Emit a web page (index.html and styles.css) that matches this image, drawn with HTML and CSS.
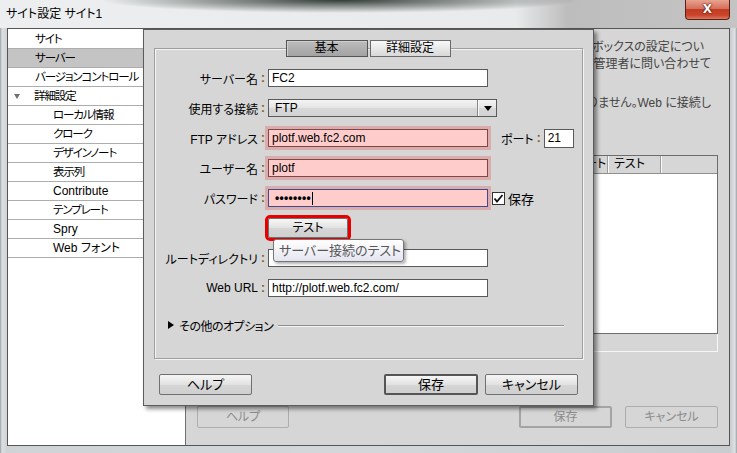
FILE: index.html
```html
<!doctype html>
<html lang="ja">
<head>
    <meta charset="utf-8">
    <title>サイト設定 サイト1</title>
    <link rel="stylesheet" href="styles.css">
</head>
<body>
<div class="window">
    <!-- Barre de titre -->
    <div class="titlebar">
        <span class="title">サイト設定 サイト1</span>
        <span class="close-btn">X</span>
    </div>

    <div class="client">
        <!-- Catégories -->
        <ul class="category-list">
            <li>サイト</li>
            <li class="selected">サーバー</li>
            <li>バージョンコントロール</li>
            <li class="group"><span class="arrow"></span>詳細設定</li>
            <li class="sub">ローカル情報</li>
            <li class="sub">クローク</li>
            <li class="sub">デザインノート</li>
            <li class="sub">表示列</li>
            <li class="sub latin">Contribute</li>
            <li class="sub">テンプレート</li>
            <li class="sub latin">Spry</li>
            <li class="sub latin">Web フォント</li>
        </ul>

        <!-- Panneau serveur (derrière la boîte) -->
        <div class="main-panel">
            <div class="intro">
                <p><span class="line-one">ボックスの設定につい</span><br>管理者に問い合わせて</p>
                <p>りません。Web に接続し</p>
            </div>
            <div class="server-table">
                <div class="table-list">
                    <div class="table-head">
                        <span></span>
                        <span></span>
                        <span></span>
                        <span>リモート</span>
                        <span>テスト</span>
                        <span></span>
                    </div>
                    <div class="table-body"></div>
                </div>
                <div class="table-foot"></div>
            </div>
            <div class="panel-buttons">
                <span class="btn btn-disabled help">ヘルプ</span>
                <span class="btn btn-disabled btn-default save">保存</span>
                <span class="btn btn-disabled cancel">キャンセル</span>
            </div>
        </div>

        <!-- Boîte de dialogue serveur -->
        <div class="server-dialog">
            <div class="tabs">
                <span class="tab active">基本</span>
                <span class="tab">詳細設定</span>
            </div>
            <div class="settings-box">
                <div class="form-row">
                    <span class="field-label">サーバー名</span><span class="colon">:</span>
                    <div class="text-field">FC2</div>
                </div>
                <div class="form-row">
                    <span class="field-label">使用する接続</span><span class="colon">:</span>
                    <div class="select-field"><span class="select-value">FTP</span><span class="select-arrow"></span></div>
                </div>
                <div class="form-row">
                    <span class="field-label">FTP アドレス</span><span class="colon">:</span>
                    <div class="text-field error">plotf.web.fc2.com</div>
                    <span class="port-label">ポート</span><span class="colon port-colon">:</span>
                    <div class="text-field port-field">21</div>
                </div>
                <div class="form-row">
                    <span class="field-label">ユーザー名</span><span class="colon">:</span>
                    <div class="text-field error">plotf</div>
                </div>
                <div class="form-row">
                    <span class="field-label">パスワード</span><span class="colon">:</span>
                    <div class="text-field error focused"><span class="dots">••••••••</span><span class="caret"></span></div>
                    <span class="checkbox">
                        <svg width="13" height="13" viewBox="0 0 13 13"><rect x="0.5" y="0.5" width="12" height="12" fill="#fff" stroke="#333"/><polyline points="2.5,6.5 5,9.5 10.5,3" fill="none" stroke="#111" stroke-width="1.8"/></svg>
                    </span>
                    <span class="checkbox-label">保存</span>
                </div>
                <div class="form-row test-row">
                    <span class="field-label"></span><span class="colon"></span>
                    <span class="btn test-btn">テスト</span>
                    <div class="tooltip">サーバー接続のテスト</div>
                </div>
                <div class="form-row">
                    <span class="field-label">ルートディレクトリ</span><span class="colon">:</span>
                    <div class="text-field"></div>
                </div>
                <div class="form-row">
                    <span class="field-label">Web URL</span><span class="colon">:</span>
                    <div class="text-field">http://plotf.web.fc2.com/</div>
                </div>
                <div class="more-options">
                    <span class="more-arrow"></span>
                    <span>その他のオプション</span>
                    <span class="more-line"></span>
                </div>
            </div>
            <div class="dialog-buttons">
                <span class="btn help">ヘルプ</span>
                <span class="btn btn-default save">保存</span>
                <span class="btn cancel">キャンセル</span>
            </div>
        </div>
    </div>
</div>
</body>
</html>
```

FILE: styles.css
```css
/* Fenêtre "サイト設定" */
* {
    box-sizing: border-box;
}

html, body {
    margin: 0;
    padding: 0;
}

body {
    width: 737px;
    height: 453px;
    overflow: hidden;
    font-family: "Liberation Sans", "Noto Sans CJK JP", sans-serif;
    font-size: 12px;
    font-feature-settings: "palt";
    color: #000;
}

.window {
    width: 737px;
    height: 453px;
    display: flex;
    flex-direction: column;
    background: linear-gradient(90deg, #9aa0a4 0, #dde0e2 2px, #cfd3d6 7px, #d4d7d9 50%, #c9cccf calc(100% - 7px), #dfe1e3 calc(100% - 2px), #9aa0a4 100%);
}

.titlebar {
    height: 28px;
    display: flex;
    align-items: flex-start;
    padding-left: 6px;
    background:
        radial-gradient(ellipse 240px 13px at 340px 0, rgba(18, 28, 22, 0.85), rgba(18, 28, 22, 0)),
        linear-gradient(90deg, #eceeef 0, #e8eaeb 70%, #bdbdbd 77%, #c4c4c4 100%);
}

.title {
    padding-top: 7px;
    line-height: 14px;
    font-size: 12px;
}

.close-btn {
    margin-left: auto;
    margin-right: 7px;
    width: 45px;
    height: 20px;
    border: 1px solid #5b2015;
    border-top: none;
    border-radius: 0 0 4px 4px;
    background: linear-gradient(#e9a391 0, #d4705b 45%, #c23c22 50%, #c9452b 80%, #dc7a5e 100%);
    color: #fff;
    font-family: "DejaVu Sans", sans-serif;
    font-weight: bold;
    font-size: 12px;
    line-height: 19px;
    text-align: center;
    text-shadow: 0 0 2px #400, 0 0 1px #400;
}

.client {
    flex: 1;
    margin: 0 7px 7px 7px;
    border: 1px solid #555;
    display: flex;
    position: relative;
    background: #d6d6d6;
}

/* Liste des catégories */
.category-list {
    width: 178px;
    margin: 0;
    padding: 1px 0 0 0;
    list-style: none;
    background: #fff;
    border-right: 1px solid #707070;
}

.category-list li {
    height: 19px;
    line-height: 18px;
    padding-left: 27px;
    border-bottom: 1px solid #adadad;
    white-space: nowrap;
    font-size: 11.5px;
    letter-spacing: -1.1px;
}

.category-list li.latin {
    font-size: 12px;
    letter-spacing: 0;
}

.category-list li.selected {
    background: #c4c4c4;
}

.category-list li.group {
    padding-left: 6px;
    display: flex;
    align-items: center;
}

.category-list li.sub {
    padding-left: 45px;
}

.arrow {
    width: 0;
    height: 0;
    border-left: 3.5px solid transparent;
    border-right: 3.5px solid transparent;
    border-top: 5px solid #707070;
    margin-right: 14px;
}

/* Panneau derrière */
.main-panel {
    flex: 1;
    display: flex;
    flex-direction: column;
    padding: 0 11px 17px 11px;
}

.intro {
    margin-top: 10px;
    padding-right: 7px;
    text-align: right;
    font-size: 12px;
    line-height: 17px;
    color: #444;
    white-space: nowrap;
}

.intro p {
    margin: 0 0 22px 0;
}

.line-one {
    padding-right: 7px;
}

.server-table {
    margin-top: 21px;
}

.table-list {
    border: 1px solid #6d6d6d;
}

.table-head {
    height: 18px;
    display: grid;
    grid-template-columns: 1fr 90px 90px 96px 53px 56px;
    background: #d6d6d6;
    border-bottom: 1px solid #8e8e8e;
}

.table-head span {
    padding-left: 6px;
    line-height: 17px;
    border-right: 1px solid #9c9c9c;
    box-shadow: 1px 0 0 #fafafa;
    white-space: nowrap;
}

.table-head span:nth-child(4) {
    padding-left: 52px;
}

.table-head span:last-child {
    border-right: none;
    box-shadow: none;
}

.table-body {
    height: 159px;
    background: #fff;
}

.table-foot {
    height: 18px;
    border-right: 1px solid #f6f6f6;
    border-bottom: 1px solid #f6f6f6;
}

.panel-buttons {
    margin-top: auto;
    display: flex;
}

.btn {
    display: inline-block;
    height: 22px;
    line-height: 20px;
    text-align: center;
    font-size: 12px;
    border: 1px solid #707070;
    border-radius: 2px;
    background: linear-gradient(#f6f6f6, #e2e2e2 50%, #d6d6d6 51%, #cfcfcf);
}

.btn-disabled {
    color: #8c8c8c;
    border-color: #adadad;
    background: #d6d6d6;
}

.panel-buttons .help {
    width: 92px;
}

.panel-buttons .save {
    width: 93px;
    margin-left: auto;
}

.panel-buttons .cancel {
    width: 93px;
    margin-left: 13px;
}

.btn-default {
    border-width: 2px;
    line-height: 18px;
}

.panel-buttons .btn-default {
    border-color: #a4a4a4;
}

/* Boîte de dialogue */
.server-dialog {
    position: absolute;
    left: 135px;
    top: 0;
    width: 451px;
    height: 377px;
    padding: 10px 10px 0 10px;
    border: 1px solid #5c5c5c;
    background: #d6d6d6;
    box-shadow: 3px 3px 4px rgba(0, 0, 0, 0.45);
    display: flex;
    flex-direction: column;
}

.tabs {
    position: relative;
    z-index: 1;
    height: 17px;
    display: flex;
    justify-content: center;
    gap: 2px;
    padding-right: 1px;
}

.tab {
    width: 82px;
    height: 17px;
    line-height: 15px;
    text-align: center;
    border: 1px solid #6a6a6a;
    background: linear-gradient(#f8f8f8, #d8d8d8);
}

.tab + .tab {
    width: 81px;
}

.tab.active {
    border-color: #555;
    background: linear-gradient(#bdbdbd, #a3a3a3);
    box-shadow: inset 1px 1px 0 #d0d0d0;
}

.settings-box {
    margin-top: -9px;
    height: 311px;
    padding-top: 14px;
    border: 1px solid #9e9e9e;
    box-shadow: inset 1px 1px 0 #f4f4f4, 1px 1px 0 #f4f4f4;
}

.form-row {
    height: 30px;
    display: flex;
    align-items: center;
}

.field-label {
    width: 103px;
    text-align: right;
    white-space: nowrap;
}

.colon {
    width: 10px;
    text-align: center;
    color: #8a5a12;
    font-weight: bold;
}

.text-field {
    width: 220px;
    height: 18px;
    padding: 0 3px;
    line-height: 16px;
    border: 1px solid #5a5a5a;
    background: #fff;
    white-space: nowrap;
}

.text-field.error {
    border-color: #7d4848;
    background: #ffcccc;
    box-shadow: 0 0 0 3px #dcabab;
}

.text-field.focused {
    border-color: #3f4c8c;
    display: flex;
    align-items: center;
    padding-left: 6px;
}

.dots {
    font-weight: bold;
    letter-spacing: 0.3px;
}

.caret {
    width: 1px;
    height: 13px;
    background: #000;
    margin-left: 1px;
}

.select-field {
    width: 229px;
    height: 18px;
    display: flex;
    border: 1px solid #5a5a5a;
    background: linear-gradient(#f4f4f4, #e4e4e4 50%, #d8d8d8 51%, #d2d2d2);
}

.select-value {
    flex: 1;
    padding-left: 6px;
    line-height: 16px;
}

.select-arrow {
    width: 19px;
    border-left: 1px solid #8a8a8a;
    box-shadow: inset 1px 0 0 #f8f8f8;
    position: relative;
}

.select-arrow::after {
    content: "";
    position: absolute;
    left: 6px;
    top: 6px;
    border-left: 4px solid transparent;
    border-right: 4px solid transparent;
    border-top: 5px solid #000;
}

.port-label {
    margin-left: 13px;
    white-space: nowrap;
}

.port-colon {
    width: 10px;
}

.port-field {
    width: 30px;
    height: 19px;
    padding-left: 3px;
}

.checkbox {
    margin-left: 4px;
    height: 13px;
    display: flex;
}

.checkbox-label {
    margin-left: 3px;
    font-size: 13px;
}

.test-row {
    position: relative;
}

.test-btn {
    width: 80px;
    height: 20px;
    line-height: 18px;
    outline: 3px solid #e60000;
}

.tooltip {
    position: absolute;
    left: 118px;
    top: 26px;
    z-index: 2;
    width: 131px;
    height: 23px;
    padding-left: 5px;
    line-height: 21px;
    font-size: 13px;
    color: #575757;
    white-space: nowrap;
    border: 1px solid #767676;
    border-radius: 3px;
    background: linear-gradient(#ffffff, #e4e5f0);
    box-shadow: 2px 2px 3px rgba(0, 0, 0, 0.3);
}

.more-options {
    margin-top: 12px;
    height: 20px;
    display: flex;
    align-items: center;
    padding-left: 13px;
    padding-right: 18px;
    letter-spacing: -0.5px;
}

.more-arrow {
    width: 0;
    height: 0;
    border-top: 4px solid transparent;
    border-bottom: 4px solid transparent;
    border-left: 6px solid #000;
    margin-right: 5px;
}

.more-line {
    flex: 1;
    height: 1px;
    margin-left: 5px;
    background: #8e8e8e;
    box-shadow: 0 1px 0 #f4f4f4;
}

.dialog-buttons {
    margin-top: 15px;
    padding: 0 5px;
    display: flex;
}

.dialog-buttons .btn {
    height: 21px;
    line-height: 19px;
    font-size: 13px;
}

.dialog-buttons .help {
    width: 93px;
}

.dialog-buttons .save {
    width: 94px;
    margin-left: auto;
    line-height: 17px;
    border-color: #555;
}

.dialog-buttons .cancel {
    width: 93px;
    margin-left: 7px;
}
```
